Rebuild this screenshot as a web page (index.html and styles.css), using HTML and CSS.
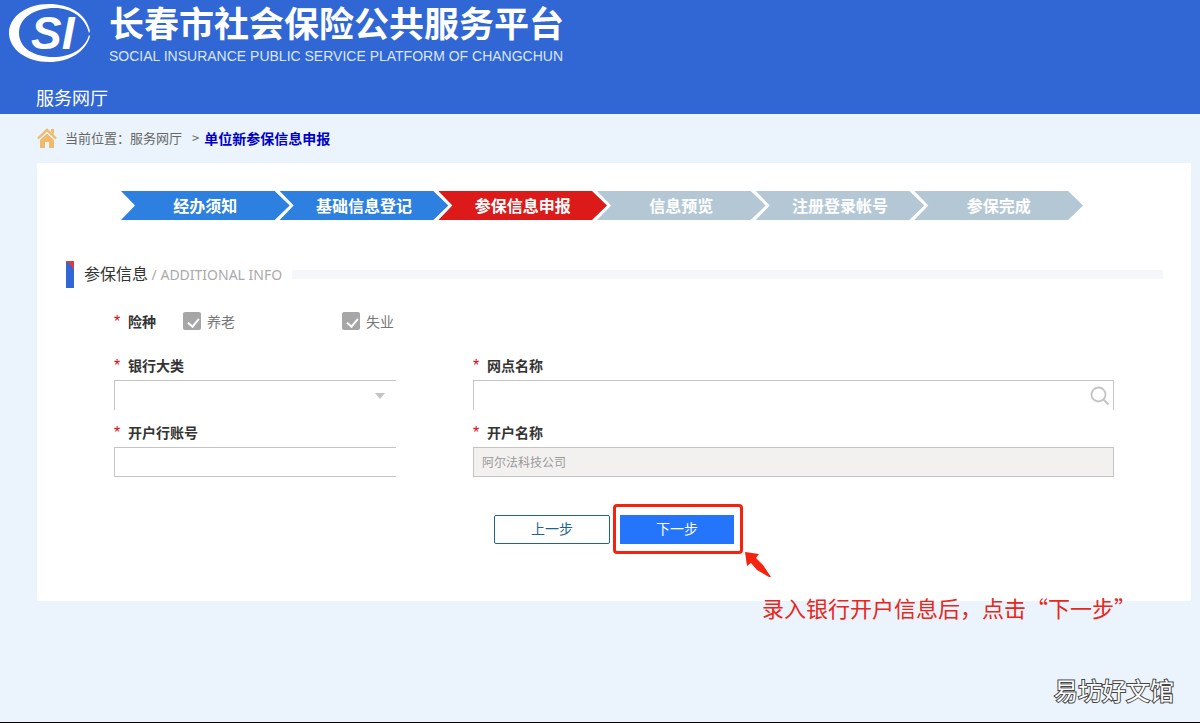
FILE: index.html
```html
<!DOCTYPE html>
<html lang="zh-CN">
<head>
    <meta charset="UTF-8">
    <meta name="viewport" content="width=device-width, initial-scale=1.0">
    <title>长春市社会保险公共服务平台</title>
    <link rel="stylesheet" href="styles.css">
</head>
<body>
    <header class="header">
        <div class="brand">
            <svg class="logo" viewBox="0 0 82 60" aria-hidden="true">
                <path fill="#fff" fill-rule="evenodd" d="M40 1C60 1 77 10 81 28L80 30C76 14 62 5 46 5C25 5 10 15 10 30C10 45 25 54 44 54C62 54 76 46 80 32L81 33C77 49 60 59 40 59C17 59 0 46 0 30C0 14 17 1 40 1Z"/>
                <text class="logo-text" x="22" y="46">SI</text>
            </svg>
            <div class="brand-text">
                <h1>长春市社会保险公共服务平台</h1>
                <p>SOCIAL INSURANCE PUBLIC SERVICE PLATFORM OF CHANGCHUN</p>
            </div>
        </div>
        <nav class="main-nav">
            <a href="#">服务网厅</a>
        </nav>
    </header>

    <div class="breadcrumb">
        <svg class="home-icon" viewBox="0 0 20 20" aria-hidden="true">
            <path d="M1 10.500L10 2L19 10.500" fill="none" stroke="#f0b96b" stroke-width="2.400"/>
            <path d="M14 1h3v6l-3-3z" fill="#f0b96b"/>
            <path d="M3 12L10 5.500L17 12V20H12V14H8V20H3Z" fill="#f0b96b"/>
        </svg>
        <span>当前位置：</span>
        <a href="#">服务网厅</a>
        <span class="sep">&gt;</span>
        <a href="#" class="current">单位新参保信息申报</a>
    </div>

    <main class="card">
        <ol class="steps">
            <li class="done">经办须知</li>
            <li class="done">基础信息登记</li>
            <li class="active">参保信息申报</li>
            <li>信息预览</li>
            <li>注册登录帐号</li>
            <li>参保完成</li>
        </ol>

        <div class="section-title">
            <h2>参保信息 <small>/ ADDITIONAL INFO</small></h2>
        </div>

        <form class="form">
            <div class="insurance" role="group" aria-labelledby="insurance-label">
                <span class="label required" id="insurance-label">险种</span>
                <label class="check"><input type="checkbox" checked> 养老</label>
                <label class="check"><input type="checkbox" checked> 失业</label>
            </div>

            <div class="fields">
                <div class="field">
                    <label class="label required" for="bank">银行大类</label>
                    <div class="control">
                        <select id="bank" class="short no-bottom"><option></option></select>
                        <svg class="caret" viewBox="0 0 10 6" aria-hidden="true"><path d="M0 0h10L5 6z" fill="#c4c4c4"/></svg>
                    </div>
                </div>
                <div class="field">
                    <label class="label required" for="branch">网点名称</label>
                    <div class="control">
                        <input type="text" id="branch" class="no-bottom">
                        <button type="button" class="search-btn" aria-label="查询">
                            <svg viewBox="0 0 20 20"><circle cx="8.500" cy="8.500" r="7" fill="none" stroke="#c4c4c4" stroke-width="1.800"/><path d="M13.500 13.500L18.500 18.500" stroke="#c4c4c4" stroke-width="2"/></svg>
                        </button>
                    </div>
                </div>
                <div class="field">
                    <label class="label required" for="account">开户行账号</label>
                    <div class="control">
                        <input type="text" id="account" class="short">
                    </div>
                </div>
                <div class="field">
                    <label class="label required" for="name">开户名称</label>
                    <div class="control">
                        <input type="text" id="name" value="阿尔法科技公司" disabled>
                    </div>
                </div>
            </div>

            <div class="actions">
                <button type="button" class="btn">上一步</button>
                <div class="next">
                    <button type="button" class="btn btn-primary">下一步</button>
                    <!-- Hint for the next step -->
                    <div class="highlight"></div>
                    <svg class="arrow" viewBox="0 0 28 28" aria-hidden="true"><path d="M1 1L15 3L12 7L19 14L27 26L25 26L13 19L7 12L3 15Z" fill="#f5220f"/></svg>
                    <p class="hint">录入银行开户信息后，点击“下一步”</p>
                </div>
            </div>
        </form>
    </main>

    <div class="watermark">易坊好文馆</div>
</body>
</html>
```
FILE: styles.css
```css
* {
    margin: 0;
    padding: 0;
    box-sizing: border-box;
}

body {
    position: relative;
    min-height: 100vh;
    font-family: "Noto Sans CJK SC", sans-serif;
    font-size: 14px;
    color: #333;
    background: #ebf4fc;
    border-bottom: 1px solid #000;
}

a {
    color: inherit;
    text-decoration: none;
}

input, select, button {
    font-family: inherit;
    font-size: 14px;
}

/* Header */
.header {
    height: 114px;
    color: #fff;
    background: #3067d4;
}

.brand {
    display: flex;
    gap: 18px;
    padding: 3px 9px 0;
}

.logo {
    width: 82px;
    height: 60px;
}

.logo-text {
    font: italic bold 46px "Liberation Sans", sans-serif;
    fill: #fff;
}

.brand h1 {
    font-size: 35px;
    line-height: 38px;
}

.brand p {
    font-family: "Liberation Sans", sans-serif;
    font-size: 14px;
    line-height: 30px;
    color: #dbe6fb;
}

.main-nav {
    padding-left: 36px;
    font-size: 18px;
    line-height: 28px;
    margin-top: 12px;
}

/* Breadcrumb */
.breadcrumb {
    display: flex;
    align-items: center;
    height: 49px;
    padding: 0 37px 2px;
    font-size: 13px;
    color: #666;
}

.home-icon {
    width: 20px;
    height: 20px;
    margin-right: 8px;
}

.breadcrumb .sep {
    margin: 0 5px 0 10px;
}

.breadcrumb .current {
    font-size: 14px;
    font-weight: bold;
    color: #0000c8;
}

/* Card */
.card {
    margin: 0 9px 0 37px;
    padding: 28px 28px 57px 29px;
    background: #fff;
}

.steps {
    display: flex;
    list-style: none;
    margin: 0 80px 40px 55px;
}

.steps li {
    flex: 1;
    height: 29px;
    margin-left: -10px;
    font-size: 16px;
    font-weight: bold;
    line-height: 28px;
    text-align: center;
    color: #fff;
    background: #b3c7d5;
    clip-path: polygon(0 0, calc(100% - 15px) 0, 100% 50%, calc(100% - 15px) 100%, 0 100%, 14px 50%);
}

.steps li:first-child {
    margin-left: 0;
}

.steps .done {
    background: #2d80e0;
}

.steps .active {
    background: #dc1a1a;
}

.section-title {
    display: flex;
    align-items: center;
    gap: 10px;
}

.section-title::before {
    content: "";
    width: 8px;
    height: 27px;
    background: linear-gradient(45deg, transparent 50%, #dc3a40 50%) top / 8px 8px no-repeat #3067d4;
}

.section-title::after {
    content: "";
    flex: 1;
    height: 9px;
    background: #f6f7fb;
}

.section-title h2 {
    font-size: 16px;
    font-weight: normal;
    line-height: 27px;
}

.section-title small {
    font-family: "Noto Sans", sans-serif;
    font-size: 14px;
    color: #aaa;
}

/* Form */
.form {
    padding: 0 49px 0 48px;
}

.label {
    font-weight: bold;
    line-height: 24px;
}

.required::before {
    content: "*";
    display: inline-block;
    width: 14px;
    font-family: "Liberation Sans", sans-serif;
    font-size: 16px;
    font-weight: normal;
    color: #e60012;
}

.insurance {
    display: flex;
    align-items: center;
    height: 28px;
    margin: 19px 0 18px;
}

.insurance .label {
    width: 69px;
}

.check {
    display: flex;
    align-items: center;
    gap: 6px;
    width: 159px;
    line-height: 18px;
    color: #777;
}

.check input {
    appearance: none;
    position: relative;
    width: 18px;
    height: 18px;
    border-radius: 2px;
    background: #a6a6a6;
}

.check input:checked::after {
    content: "";
    position: absolute;
    left: 7px;
    top: 4px;
    width: 5px;
    height: 9px;
    border: solid #fff;
    border-width: 0 2px 2px 0;
    transform: rotate(40deg);
}

.fields {
    display: grid;
    grid-template-columns: 11fr 25fr;
    column-gap: 77px;
    row-gap: 10px;
}

.field .label {
    display: block;
    margin-bottom: 2px;
}

.control {
    position: relative;
}

.control input,
.control select {
    display: block;
    appearance: none;
    width: 100%;
    height: 30px;
    padding: 0 8px 2px;
    border: 1px solid #c4c4c4;
    background: #fff;
}

.control .short {
    border-right: none;
}

.control .no-bottom {
    border-bottom: none;
}

.control input:disabled {
    font-size: 12px;
    color: #999;
    background: #f3f1f0;
}

.caret {
    position: absolute;
    right: 11px;
    top: 13px;
    width: 10px;
    height: 6px;
    pointer-events: none;
}

.search-btn {
    position: absolute;
    right: 4px;
    top: 6px;
    width: 20px;
    height: 20px;
    border: none;
    background: none;
    cursor: pointer;
}

.search-btn svg {
    display: block;
}

/* Buttons */
.actions {
    display: flex;
    justify-content: center;
    gap: 10px;
    margin-top: 38px;
}

.btn {
    display: block;
    width: 116px;
    height: 29px;
    padding-bottom: 4px;
    color: #1f6391;
    background: #fff;
    border: 1px solid #1f6391;
    border-radius: 2px;
    cursor: pointer;
}

.btn-primary {
    width: 114px;
    color: #fff;
    background: #2475fc;
    border: none;
    border-radius: 0;
}

.next {
    position: relative;
}

.highlight {
    position: absolute;
    inset: -11px -9px -10px -7px;
    border: 3px solid #f5220f;
    border-radius: 4px;
    pointer-events: none;
}

.arrow {
    position: absolute;
    left: 124px;
    top: 36px;
    width: 28px;
    height: 28px;
}

.hint {
    position: absolute;
    left: 142px;
    top: 76px;
    font-size: 22px;
    line-height: 32px;
    white-space: nowrap;
    color: #e8261a;
}

.watermark {
    position: absolute;
    right: 26px;
    bottom: 14px;
    font-size: 24px;
    line-height: 36px;
    color: #fff;
    -webkit-text-stroke: 2px #444;
    paint-order: stroke fill;
}
```
